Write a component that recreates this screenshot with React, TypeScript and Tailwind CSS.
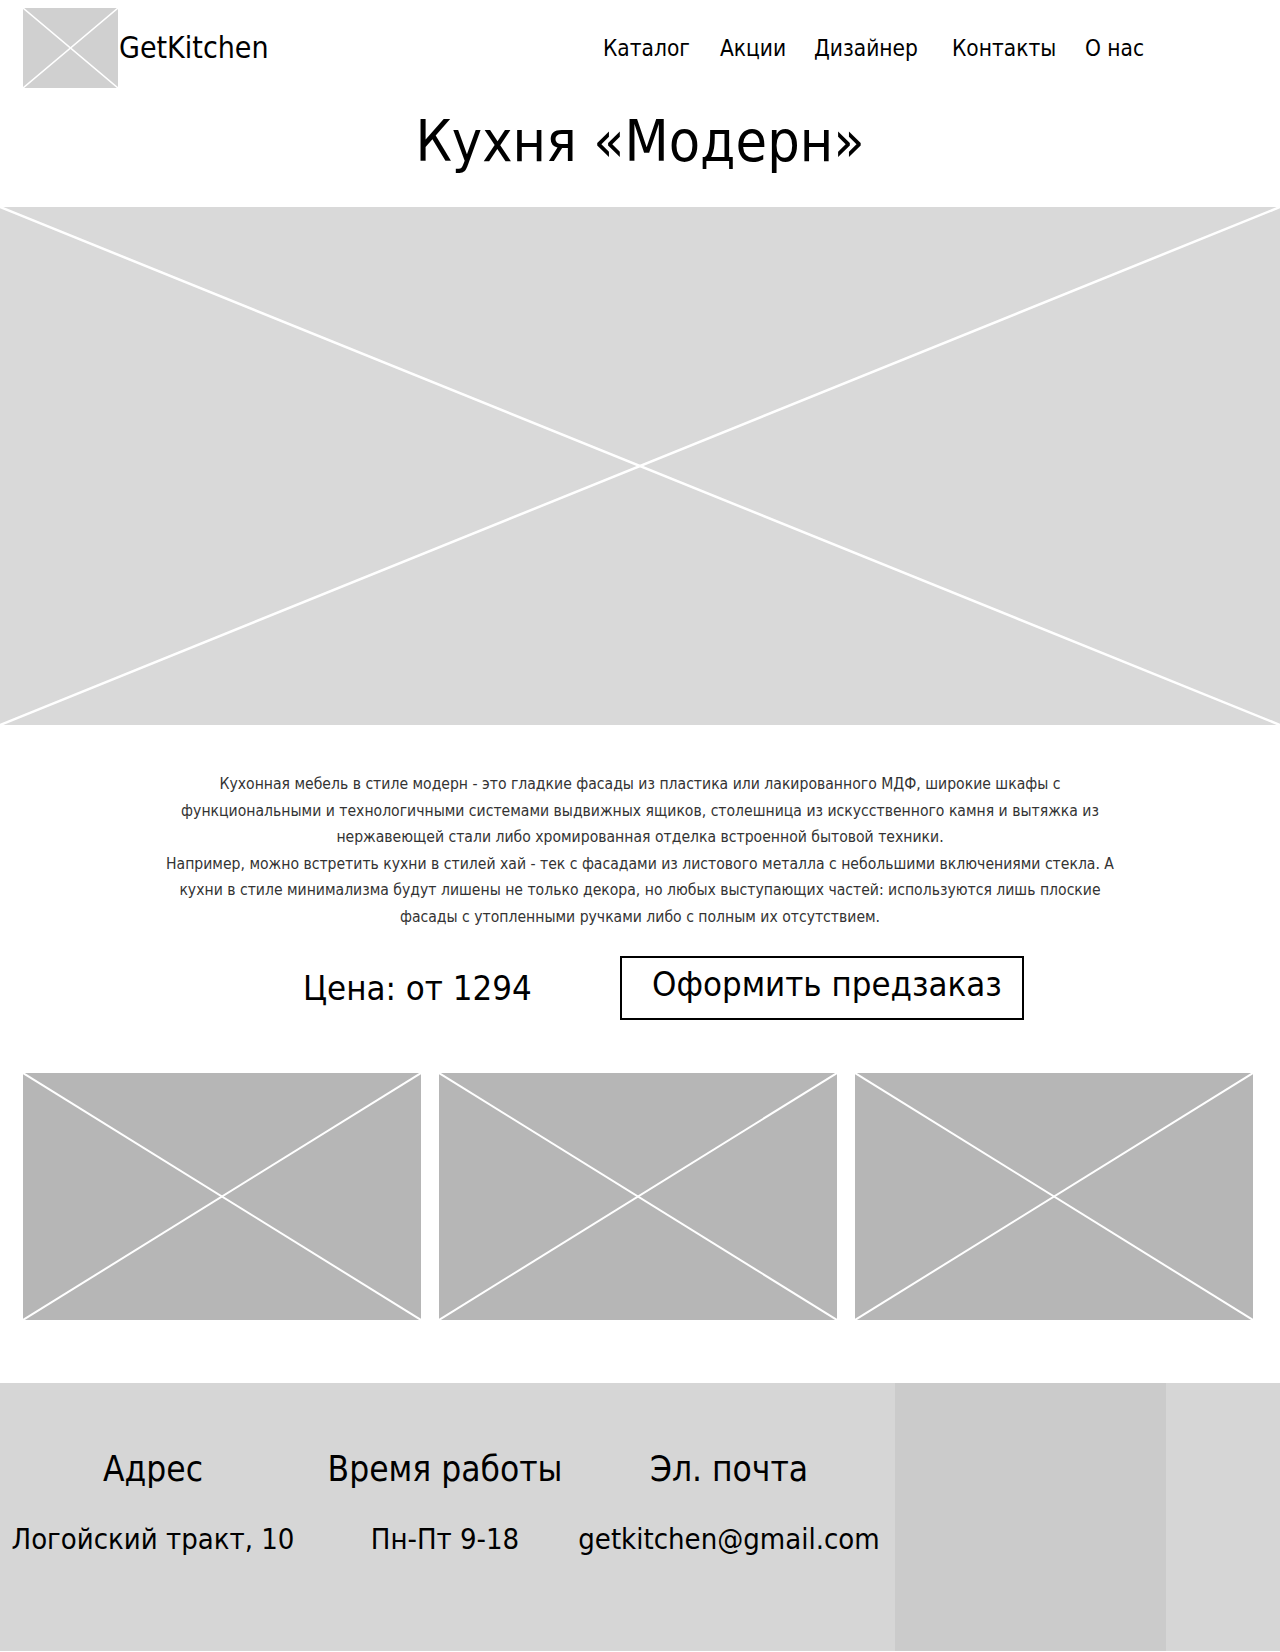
import React from 'react';

const font = { fontFamily: '"DejaVu Sans Condensed", "DejaVu Sans", Verdana, sans-serif' };

function Placeholder({ className, stroke = 2 }: { className: string; stroke?: number }) {
  return (
    <div className={`relative ${className}`}>
      <svg className="absolute inset-0 h-full w-full" viewBox="0 0 100 100" preserveAspectRatio="none">
        <line x1="0" y1="0" x2="100" y2="100" stroke="white" strokeWidth={stroke} vectorEffect="non-scaling-stroke" />
        <line x1="100" y1="0" x2="0" y2="100" stroke="white" strokeWidth={stroke} vectorEffect="non-scaling-stroke" />
      </svg>
    </div>
  );
}

const nav = [
  { label: 'Каталог', w: 'w-[117px]' },
  { label: 'Акции', w: 'w-[94px]' },
  { label: 'Дизайнер', w: 'w-[138px]' },
  { label: 'Контакты', w: 'w-[133px]' },
  { label: 'О нас', w: 'w-[60px]' },
];

const lines = [
  'Кухонная мебель в стиле модерн - это гладкие фасады из пластика или лакированного МДФ, широкие шкафы с',
  'функциональными и технологичными системами выдвижных ящиков, столешница из искусственного камня и вытяжка из',
  'нержавеющей стали либо хромированная отделка встроенной бытовой техники.',
  'Например, можно встретить кухни в стилей хай - тек с фасадами из листового металла с небольшими включениями стекла. А',
  'кухни в стиле минимализма будут лишены не только декора, но любых выступающих частей: используются лишь плоские',
  'фасады с утопленными ручками либо с полным их отсутствием.',
];

const footerCols = [
  { title: 'Адрес', value: 'Логойский тракт, 10', w: 'w-[290px]' },
  { title: 'Время работы', value: 'Пн-Пт 9-18', w: 'w-[294px]' },
  { title: 'Эл. почта', value: 'getkitchen@gmail.com', w: 'w-[274px]' },
];

export default function App() {
  return (
    <div className="w-[1280px] min-h-[1652px] bg-white text-black font-stretch-condensed" style={font}>
      <header className="flex h-[96px] items-center pl-[23px]">
        <div className="flex w-[580px] items-center">
          <Placeholder className="h-[80px] w-[95px] bg-[#d0d0d0]" stroke={1.5} />
          <span className="ml-[1px] text-[30px] leading-none">GetKitchen</span>
        </div>
        <nav className="flex items-center text-[22.5px] leading-none">
          {nav.map((n) => (
            <a key={n.label} className={`${n.w} whitespace-nowrap`}>{n.label}</a>
          ))}
        </nav>
      </header>

      <div className="h-[111px] pt-[17px] text-center">
        <h1 className="text-[57px] leading-none">Кухня «Модерн»</h1>
      </div>

      <Placeholder className="h-[518px] w-full bg-[#d9d9d9]" stroke={2.5} />

      <div className="mt-[46px] text-center text-[15.6px] leading-[26.5px] text-[#333]">
        {lines.map((l) => (
          <p key={l} className="whitespace-nowrap">{l}</p>
        ))}
      </div>

      <div className="mt-[26px] flex items-center pl-[303px]">
        <div className="w-[317px] text-[34.5px] leading-none">Цена: от 1294</div>
        <button className="flex h-[64px] w-[404px] items-center border-2 border-black pb-[8px] pl-[30px] text-[34.5px] leading-none">
          Оформить предзаказ
        </button>
      </div>

      <div className="mt-[53px] flex gap-[18px] px-[23px]">
        <Placeholder className="h-[247px] w-[398px] bg-[#b6b6b6]" stroke={2} />
        <Placeholder className="h-[247px] w-[398px] bg-[#b6b6b6]" stroke={2} />
        <Placeholder className="h-[247px] w-[398px] bg-[#b6b6b6]" stroke={2} />
      </div>

      <footer className="mt-[63px] flex h-[268px] bg-[#d6d6d6] pl-[8px]">
        {footerCols.map((c) => (
          <div key={c.title} className={`${c.w} flex flex-col items-center pt-[69px]`}>
            <h3 className="whitespace-nowrap text-[35px] leading-none">{c.title}</h3>
            <p className="mt-[38px] whitespace-nowrap text-[29px] leading-none">{c.value}</p>
          </div>
        ))}
        <div className="ml-[29px] h-full w-[271px] bg-[#cbcbcb]" />
      </footer>
    </div>
  );
}
